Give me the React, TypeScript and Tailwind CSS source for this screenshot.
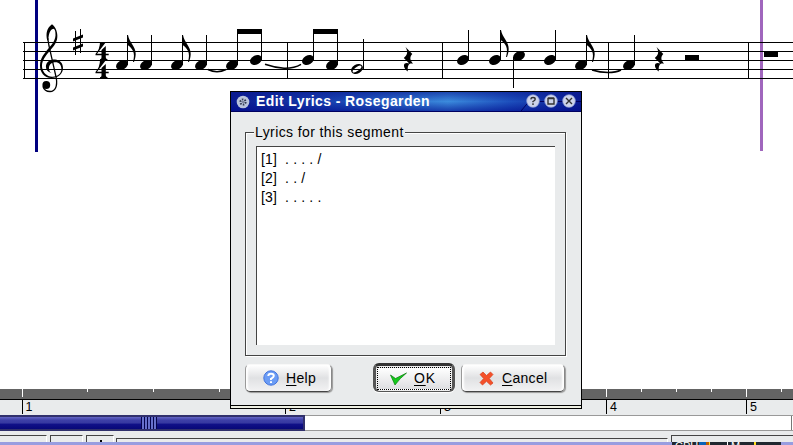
import React from "react";

const font = "font-['Liberation_Sans',Arial,sans-serif]";

const Head = ({ x, y }: { x: number; y: number }) => (
  <ellipse cx={x} cy={y} rx="6.3" ry="4.5" transform={`rotate(-28 ${x} ${y})`} />
);

const Note = ({ x, y, top, flag }: { x: number; y: number; top: number; flag?: boolean }) => (
  <g>
    <Head x={x} y={y} />
    <rect x={x + 5} y={top} width="1" height={y - top} />
    {flag && (
      <path
        transform={`translate(${x + 5} ${top})`}
        d="M0 0h1C2 7 9 12 8.7 19C8.6 22 7.8 25 7 27H6C7.3 22 7.3 19 6 16C4.5 13 2.5 10.8 0 10Z"
      />
    )}
  </g>
);

const QuarterRest = ({ x }: { x: number }) => (
  <path
    transform={`translate(${x} 47)`}
    d="M2.5 0L9.3 7C6.8 10 6.5 12 10 16.8C6 15.8 4.3 18 4.8 24.5C1.2 22 0 18 1.8 16.5C3.2 15.5 5 16 6.3 16.4L.8 11C4.4 8 5.3 5 2.5 0Z"
  />
);

const Four = ({ y }: { y: number }) => (
  <path
    transform={`translate(95 ${y})`}
    d="M5 0H11L2 11.7H6.5V8L10.8 4V11.7H13.7V13.2H10.8V15.5Q11 17 12.5 17.3V18H5V17.3Q6.5 17 6.5 15.5V13.2H.5V12Q5 7 5 0Z"
  />
);

const Staff = () => (
  <svg width="793" height="160" viewBox="0 0 793 160" className="block" fill="#000">
    <rect x="35" width="3" height="152" fill="#00007f" />
    <rect x="760" width="3" height="151" fill="#a066bd" />
    {[42, 51, 60, 69, 78].map((y) => (
      <rect key={y} x="23" y={y} width="770" height="1" />
    ))}
    {[24, 287, 442, 608, 748].map((x) => (
      <rect key={x} x={x} y="42" width="1" height="37" />
    ))}
    <path d="M52 24.3C56 27 58.4 34 57 39.5C55.2 46 50 50 46.4 55C43 59.5 41.7 63 42 67C43 73 47 76.5 52 76.7C58 77 61.5 73 61.4 69C61.4 65 59 62.3 55.5 62.3C51.5 62.3 48.5 65 49 69C49.2 71 50 72 51.5 73C47.5 71.8 45.8 69.5 45.9 66.5C46 62 50 59.5 55 59.5C59.5 59.5 63 63 63 68C63 74 58 78 51.5 78C44 78 39.9 72 40 65.5C40.2 58 44 54 48 49C52 44.5 55 41 55.5 35.5C55.7 31 54.8 29 53.2 28.8C50.5 29.5 48.7 33 48.4 40L47.2 40.5C45.5 33 47 28 52 24.3Z" />
    <path d="M47.7 38L49 46L56.3 78C57.5 86 55.5 91.5 50 91.5C46.5 91.5 44 90 43 86.5" fill="none" stroke="#000" strokeWidth="1.3" />
    <circle cx="46.3" cy="85" r="3.9" />
    <path d="M75 31h1v24h-1zM80 29h1v24h-1zM73 38.5L83 34.5V37.5L73 41.5ZM73 47.5L83 43.5V46.5L73 50.5Z" />
    <Four y={42} />
    <Four y={60} />
    <Note x={122} y={65} top={35} flag />
    <Note x={146} y={65} top={35} />
    <Note x={177} y={65} top={35} flag />
    <Note x={201} y={65} top={35} />
    <Note x={232} y={65} top={30} />
    <Note x={256} y={60} top={30} />
    <rect x="237" y="29" width="25" height="5" />
    <Note x={308} y={60} top={30} />
    <Note x={332} y={65} top={30} />
    <rect x="313" y="29" width="25" height="5" />
    <g fill="none" stroke="#000" strokeWidth="1.5">
      <path d="M208 69.5Q217 74 226 69.5" />
      <path d="M265 64.3Q274 67.5 284 68.2Q294 68.5 301 64.3" />
      <path d="M592 70Q600 72.5 608 72.5Q616 72.5 621 70" />
    </g>
    <Head x={357} y={69} />
    <ellipse cx="357" cy="69" rx="5.2" ry="2" fill="#fff" transform="rotate(-36 357 69)" />
    <rect x="352" y="69" width="10" height="1" />
    <rect x="363" y="39" width="1" height="30" />
    <QuarterRest x={403} />
    <Note x={463} y={60} top={30} />
    <Note x={495} y={60} top={30} flag />
    <Head x={519} y={56} />
    <rect x="513" y="57" width="1" height="31" />
    <Note x={550} y={60} top={30} />
    <Note x={581} y={65} top={35} flag />
    <Note x={629} y={65} top={35} />
    <QuarterRest x={654} />
    <rect x="685" y="55" width="14" height="5" />
    <rect x="764" y="52" width="14" height="5" />
  </svg>
);

const Ruler = () => (
  <svg width="793" height="26" viewBox="0 0 793 26" className="block shrink-0">
    <rect width="793" height="26" fill="#e9ebec" />
    <rect width="793" height="10" fill="#646464" />
    <rect y="10" width="793" height="1" />
    {[22, 606, 746].map((x) => (
      <g key={x}>
        <rect x={x} width="1" height="8" fill="#fff" />
        <rect x={x} y="11" width="1" height="14" />
      </g>
    ))}
    {[87, 153, 219, 641, 676, 711, 781].map((x) => (
      <rect key={x} x={x} width="1" height="3" fill="#fff" />
    ))}
    <rect x="285" y="11" width="1" height="14" />
    <rect x="440" y="11" width="1" height="14" />
    <g fontFamily="Liberation Sans, Arial, sans-serif" fontSize="12.5">
      <text x="25.5" y="22">1</text>
      <text x="289" y="22">2</text>
      <text x="444" y="22">3</text>
      <text x="610" y="22">4</text>
      <text x="750" y="22">5</text>
    </g>
  </svg>
);

const TitleButton = ({ children }: { children: React.ReactNode }) => (
  <svg width="14" height="14" viewBox="0 0 14 14" className="block" fill="none" stroke="#333" strokeWidth="1.4">
    <circle cx="7" cy="7" r="6.3" fill="#cdd3ea" stroke="#8fa0d8" strokeWidth=".7" />
    {children}
  </svg>
);

const buttonBase =
  "flex items-center rounded-[5px] border border-t-[#f8f8f8] border-l-[#999] border-r-[#888] border-b-[#444] bg-linear-to-b from-white via-[#e0e1e3] to-[#f2f2f3] shadow-[inset_3px_0_2px_-1px_#fff,inset_-3px_0_2px_-1px_#fff,1px_1px_1px_#999]";

const Dialog = () => (
  <div className="absolute left-[230px] top-[91px] flex h-[318px] w-[352px] flex-col border border-black bg-[#e9ebec]">
    <div className="relative flex h-5 shrink-0 items-center border-b border-[#000060] bg-[linear-gradient(to_bottom,#0a1a9099,#1a50c000_50%,#000a8a99),linear-gradient(to_right,#0a1a90,#1d4cb8_35%,#3b8bdd_62%,#1d4fbd_80%,#0a1a90)] pl-[5px]">
      <svg width="14" height="14" viewBox="0 0 14 14" className="block">
        <circle cx="7" cy="7" r="6.3" fill="#b9c3dc" />
        <circle cx="7" cy="7" r="2.6" fill="none" stroke="#333b50" strokeWidth="2" strokeDasharray="1.5 1.2" />
        <circle cx="7" cy="7" r=".8" fill="#333b50" />
      </svg>
      <span className="-mt-[2px] ml-[6px] whitespace-pre text-[14px] font-bold leading-5 tracking-[0.4px] text-white">Edit Lyrics - Rosegarden</span>
      <svg width="60" height="20" className="absolute right-0 top-0" fill="none" stroke="#000060">
        <path d="M0 19L8 9.5H60" />
      </svg>
      <div className="absolute right-[5px] top-[2px] flex gap-1">
        <TitleButton>
          <path d="M4.8 5.3Q5 3.5 7 3.5Q9.2 3.5 9.2 5.2Q9.2 6.3 7 7.5V8.3M7 9.3V11" />
        </TitleButton>
        <TitleButton>
          <path d="M4 4.5H10V10H4ZM4 4H10" />
        </TitleButton>
        <TitleButton>
          <path d="M4 4L10 10M10 4L4 10" />
        </TitleButton>
      </div>
    </div>
    <fieldset className="ml-[14px] mt-[12px] flex h-[232px] w-[321px] shrink-0 flex-col">
      <div className="relative mt-[8px] h-[224px] border border-[#444] pl-[10px] pt-[13px] shadow-[1px_1px_0_#fff,inset_1px_1px_0_#fff]">
        <legend className="absolute -top-[10px] left-[8px] whitespace-nowrap bg-[#e9ebec] px-px text-[14px] leading-[18px] tracking-[0.4px]">
          Lyrics for this segment
        </legend>
        <div className="h-[199px] w-[299px] whitespace-pre border-l border-t border-[#444] bg-white pl-1 pt-[3px] text-[14px] leading-[19px] tracking-[0.15px]">
          <div>[1]  . . . . /</div>
          <div>[2]  . . /</div>
          <div>[3]  . . . . .</div>
        </div>
      </div>
    </fieldset>
    <div className="mt-[7px] flex shrink-0 pl-[14px] text-[14px] tracking-[0.3px]">
      <div className={`${buttonBase} mt-px h-[28px] w-[87px] pl-[17px]`}>
        <svg width="16" height="16" viewBox="0 0 16 16">
          <circle cx="8" cy="8" r="7.2" fill="#6b9cf5" stroke="#4173dd" />
          <path d="M5.3 6Q5.5 3.7 8 3.7Q10.8 3.7 10.8 6Q10.8 7.3 8 8.8V10M8 11.2V13" fill="none" stroke="#fff" strokeWidth="2" />
        </svg>
        <span className="ml-[7px]"><u className="underline-offset-2">H</u>elp</span>
      </div>
      <div className="ml-[41px] flex h-[29px] w-[82px] rounded-[6px] border-[3px] border-b border-[#555] border-t-[#333] bg-[#eee] p-[1px] shadow-[0_1px_1px_#fff]">
        <div className="flex flex-1 items-center border border-dotted border-black bg-linear-to-b from-white to-[#dedfe1] pl-[12px]">
          <svg width="17" height="14" viewBox="0 0 17 14">
            <path d="M.5 3L5.5 6.5L16.5 1Q10 6 5 13Z" fill="#14c91b" stroke="#087c0c" strokeWidth=".7" />
          </svg>
          <span className="ml-[7px] tracking-[0.8px]"><u className="underline-offset-2">O</u>K</span>
        </div>
      </div>
      <div className={`${buttonBase} ml-[6px] mt-px h-[28px] w-[104px] pl-[17px]`}>
        <svg width="15" height="15" viewBox="0 0 15 15">
          <path d="M1 3.5L4 1L7.5 4.5L11.5 1L14 3.5L10.3 7.5L14 12L11.5 14L7.5 10.3L3.5 14L1 11.5L4.7 7.5Z" fill="#f4502a" stroke="#d63e1b" strokeWidth=".7" />
        </svg>
        <span className="ml-[8px]"><u className="underline-offset-2">C</u>ancel</span>
      </div>
    </div>
    <div className="mt-auto h-[3px] border-t border-black bg-[#eeefe2]" />
  </div>
);

export default function App() {
  return (
    <div className={`relative flex h-[445px] w-[793px] flex-col overflow-hidden bg-white text-black ${font}`}>
      <div className="h-[389px] shrink-0">
        <Staff />
      </div>
      <Ruler />
      <div className="flex h-4 shrink-0 border-b border-t border-[#999] bg-white">
        <div className="-my-px flex h-4 w-[305px] justify-end border-2 border-l-0 border-[#30306c] bg-[linear-gradient(to_bottom,#6466c4,#3e40a8_25%,#3638a0_50%,#101088_60%,#080878)] pr-[146px]">
          <div className="w-4 bg-[repeating-linear-gradient(to_right,#05054c_0_1px,#6670cc_1px_3px)]" />
        </div>
        <div className="ml-auto mr-px w-px bg-[#777]" />
      </div>
      <div className="flex h-[14px] shrink-0 flex-col bg-[#e9ebec]">
        <div className="flex h-[11px] items-end">
          <div className="h-[7px] w-[47px] border-r border-t border-[#444] border-r-white" />
          <div className="ml-[3px] h-[7px] w-[33px] border border-b-0 border-[#444] border-r-white" />
          <div className="ml-[3px] flex h-[7px] w-[28px] justify-center border border-b-0 border-[#444] border-r-white pl-px pt-[4px]">
            <div className="h-[3px] w-[2px] bg-black" />
          </div>
          <div className="ml-[2px] h-[4px] w-[552px] border border-b-0 border-[#444] border-r-white" />
          <div className="ml-[3px] h-[7px] flex-1 border border-b-0 border-r-0 border-[#444]" />
        </div>
        <div className="flex h-[3px] bg-[#989de0] pl-[672px]">
          <div className="flex h-[3px] w-[109px] overflow-hidden bg-[#202830] pl-[3px] text-[11px] leading-[10px] text-white">
            <span className="-mt-px w-[24px]">CPU</span>
            <span className="h-[3px] w-[7px] bg-[#0a63b8]" />
            <span className="h-[3px] w-[3px] bg-[#b85a00]" />
            <span className="mr-[17px] h-[3px] w-px bg-yellow-300" />
            <span className="mr-[3px] h-[3px] w-px bg-white" />
            <span className="-mt-px w-[23px]">M</span>
            <span className="h-[3px] w-[2px] bg-yellow-300" />
          </div>
        </div>
      </div>
      <Dialog />
    </div>
  );
}
